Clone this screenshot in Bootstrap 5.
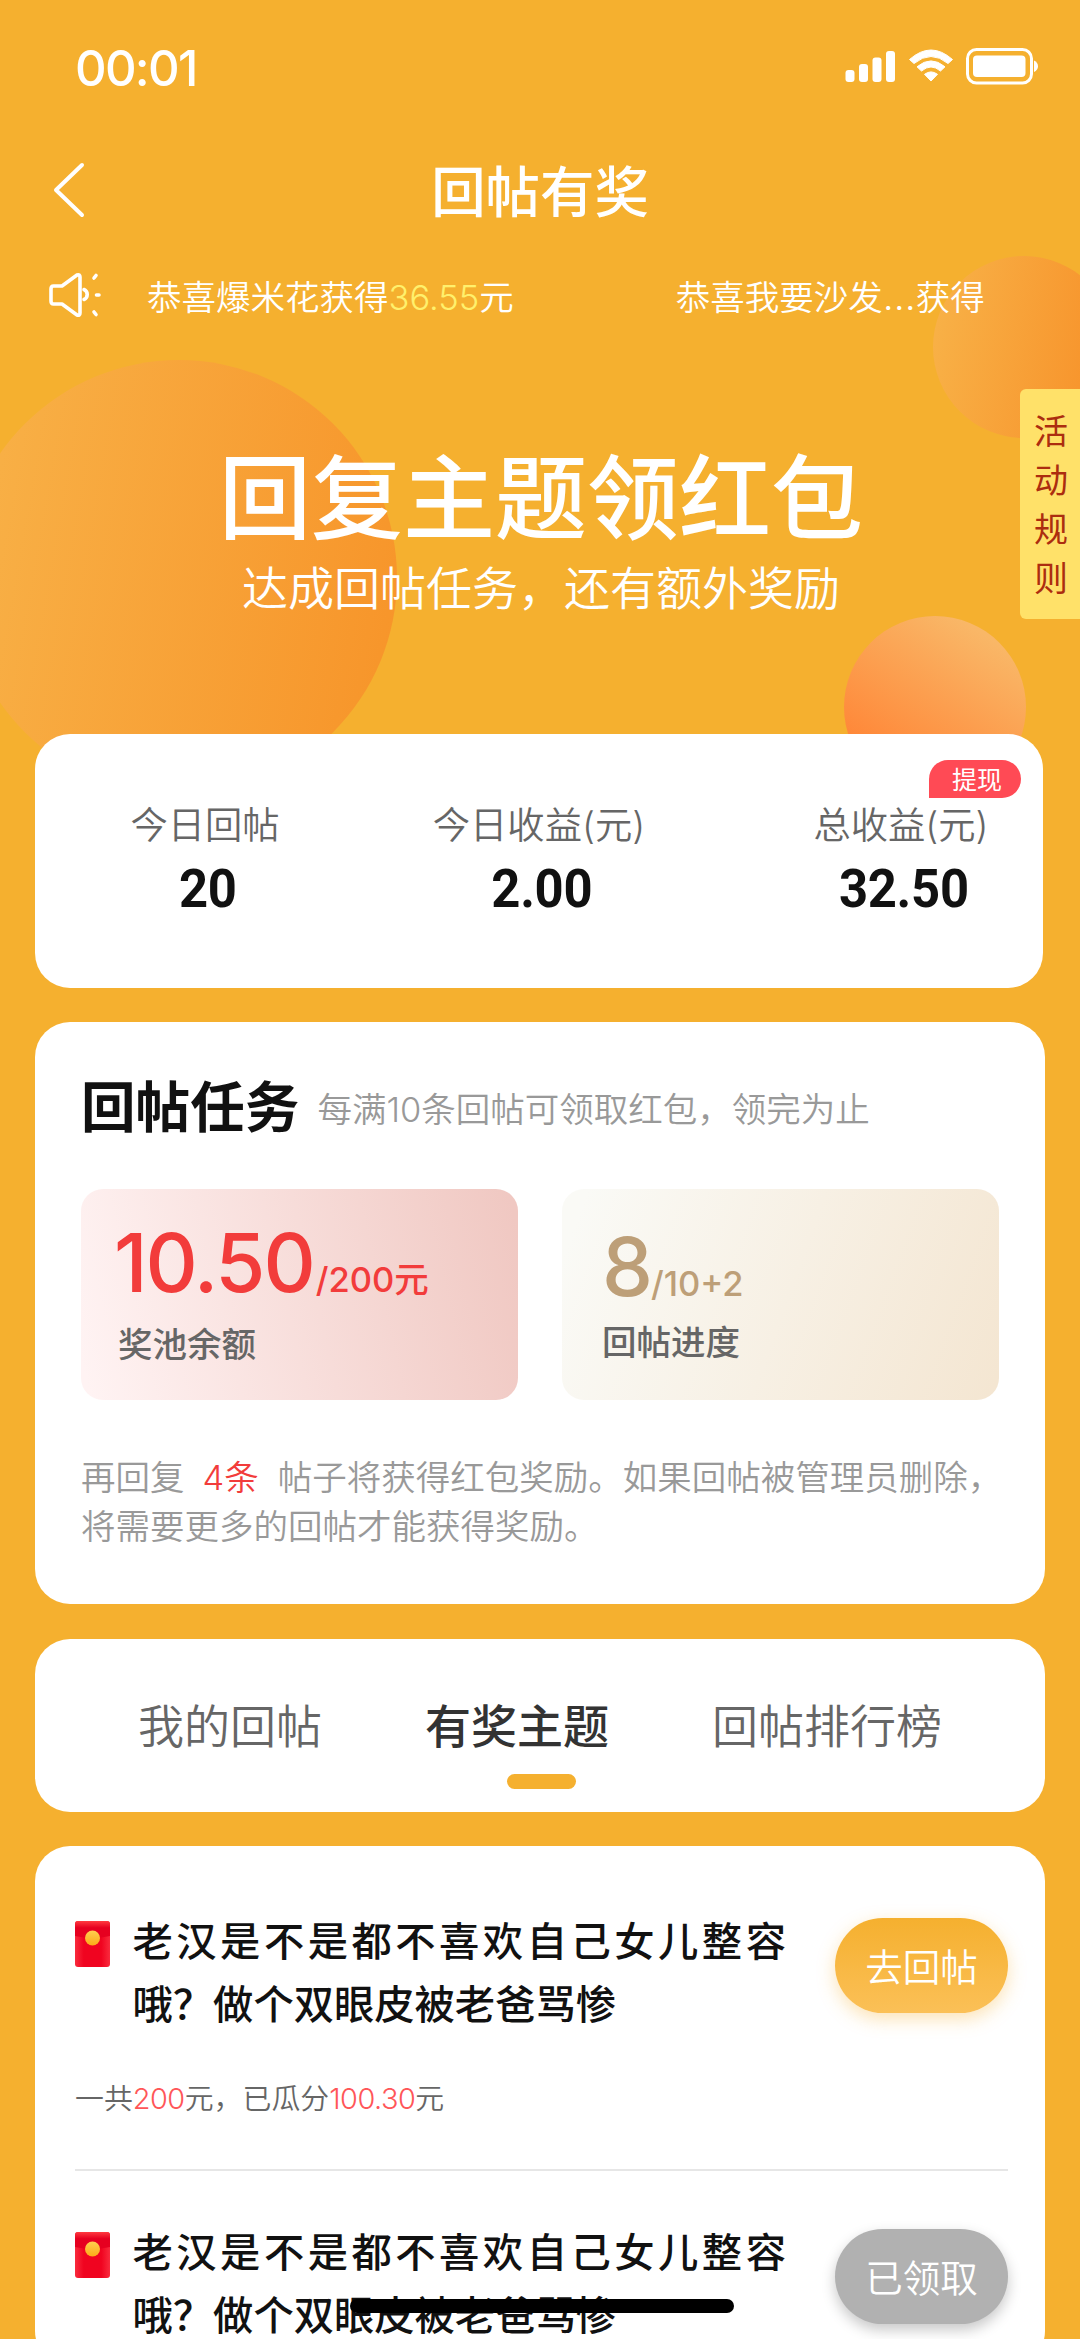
<!DOCTYPE html>
<html lang="zh-CN">
<head>
<meta charset="utf-8">
<meta name="viewport" content="width=device-width, initial-scale=1">
<title>回帖有奖</title>
<link href="https://cdn.jsdelivr.net/npm/bootstrap@5.3.0/dist/css/bootstrap.min.css" rel="stylesheet">
<style>
body{background:#f5b02f;font-family:Inter,"Noto Sans CJK SC",sans-serif;color:#111;height:2339px;overflow:hidden;font-size:34.5px;line-height:49px}
.app-screen{width:1080px;height:2339px;overflow:hidden}
.orb{position:absolute;border-radius:50%}
.orb-left{left:-39px;top:360px;width:436px;height:436px;background:linear-gradient(100deg,#f8b147 5%,#f7952a 95%)}
.orb-top{left:933px;top:256px;width:182px;height:182px;background:linear-gradient(100deg,#f8b147 5%,#f7922a 90%)}
.orb-low{left:844px;top:616px;width:182px;height:182px;background:linear-gradient(212deg,#f9b767 15%,#ff8637 80%)}
.status-row{height:136px;padding:0 40px 0 75px}
.clock{font-size:49px;line-height:137px;letter-spacing:-1.700px;font-weight:450}
.title-row{height:110px}
.title-row h1{font-size:54.400px;line-height:112px;font-weight:500}
.back-link{position:absolute;left:50px;top:26px;line-height:0}
.notice-row{height:98px;padding-left:46px;font-weight:350}
.dots{font-size:39px;line-height:1px}
.hero{height:390px;padding-top:100px}
.hero h2{font-size:92px;line-height:110px;font-weight:500;padding-left:2px}
.hero p{font-size:46px;line-height:66px;font-weight:350;padding:1px 0 0 2px}
.rules-tab{position:absolute;right:0;top:389px;width:60px;height:230px;padding:18px 12px 0 14px;border-radius:6px 0 0 6px;background:#ffe169;color:#ac2d0f;font-size:34px;text-decoration:none}
.panel{background:#fff;border-radius:35px;margin-left:35px;width:1010px}
.stats{width:1008px;height:254px;padding-top:67px}
.stat-label{font-size:37.300px;line-height:49px;color:#666;font-weight:350}
.stat-value{font-family:Roboto,sans-serif;font-weight:700;font-size:54px;line-height:62px;margin-top:8px;padding-left:6px;letter-spacing:-.3px;transform:scaleX(.94)}
.cash-tag{position:absolute;left:894px;top:26px;width:92px;height:38px;padding-left:23px;border-radius:19px 19px 19px 0;background:#ff4a55;color:#fff;font-size:25px;line-height:40px}
.tasks{height:582px;margin-top:34px;padding:51px 46px 0}
.tasks h3{font-size:54.600px;line-height:68px;font-weight:600}
.muted{color:#999;font-weight:350}
.tile{width:437px;height:211px;border-radius:22px}
.tile-red{padding:22px 0 0 37px;background:linear-gradient(77deg,#fff3f3 2%,#f0c8c2 98%);color:#f23c3b}
.tile-gold{padding:26px 0 0 40px;background:linear-gradient(110deg,#fafaf6 5%,#f4e6d2 98%);color:#bd9f78}
.figure-line{height:104px;line-height:104px}
.big-num{font-size:81px;font-weight:500;letter-spacing:-2px}
.tile-red .big-num{margin:0 2px 0 -4px}
.unit{font-weight:500;font-size:34.500px}
.tile-label{color:#666;font-weight:500;margin-top:5px}
.tile-gold .tile-label{margin-top:-1px}
.tabs{height:173px;margin-top:35px;font-size:46px;line-height:64px;color:#666;font-weight:350}
.tab-item{margin:55px 0 0 103px}
.tab-active{color:#333;font-weight:500}
.tab-mark{position:absolute;left:472px;top:135px;width:69px;height:15px;border-radius:8px;background:#f5b02f}
.posts{height:520px;margin-top:34px;padding:0 37px 0 40px}
.post{height:325px;padding-top:64px;border-bottom:2px solid #e6e6e6}
.post + .post{height:312px;margin-top:-14px;border:0}
.post-title{width:665px;margin-left:22.500px;font-size:40.300px;line-height:63px;font-weight:500}
.wide-line{letter-spacing:3.500px;white-space:nowrap}
.post-note{font-size:28.900px;line-height:40px;margin-top:43px;color:#666;font-weight:350}
.rosy{color:#ff5658;letter-spacing:-.5px}
.pill{width:173px;height:95px;border-radius:48px;font-size:37.500px;line-height:99px;padding:0;font-weight:350;color:#fff;border:0;margin-top:8px}
.pill-go{background:linear-gradient(#f5b02f,#fbc057);box-shadow:0 6px 18px rgba(245,176,47,.35)}
.pill-done{background:#b1b1b1;box-shadow:0 6px 14px rgba(0,0,0,.22)}
.home-bar{position:absolute;left:350px;top:2299px;width:384px;height:14px;border-radius:7px;background:#000}
</style>
</head>
<body>
<main class="app-screen position-relative">
  <div class="orb orb-left"></div><div class="orb orb-top"></div><div class="orb orb-low"></div>

  <header class="position-relative text-white">
    <div class="status-row d-flex justify-content-between">
      <span class="clock">00:01</span>
      <svg width="200" height="136" viewBox="840 0 200 136" fill="#fff">
        <rect x="845.5" y="70" width="9" height="12" rx="3"/><rect x="859" y="64" width="9" height="18" rx="3"/><rect x="872.5" y="57.500" width="9" height="24.500" rx="3"/><rect x="886" y="51" width="9" height="31" rx="3"/>
        <path d="M909.5 59.500Q931 40.500 952.500 59.500L948 63.500Q931 49.500 914 63.500Z" stroke="#fff" stroke-width="1" stroke-linejoin="round"/>
        <path d="M917 66.800Q931 55 945 66.800L940.500 71Q931 63 921.500 71Z" stroke="#fff" stroke-width="1" stroke-linejoin="round"/>
        <path d="M924.500 74.300Q931 69.500 937.500 74.300L931 81Z" stroke="#fff" stroke-width="1" stroke-linejoin="round"/>
        <rect x="967.500" y="49.500" width="64" height="33.500" rx="9" fill="none" stroke="#fff" stroke-width="3"/>
        <rect x="973" y="55.500" width="52.500" height="21.500" rx="4"/><path d="M1034 60.500Q1038 62.500 1038 66.200T1034 72Z"/>
      </svg>
    </div>
    <div class="title-row position-relative text-center">
      <a class="back-link" href="#" aria-label="返回"><svg width="40" height="60" fill="none" stroke="#fff" stroke-width="4" stroke-linecap="round" stroke-linejoin="round"><path d="M32 3 6 28l26 25"/></svg></a>
      <h1 class="m-0">回帖有奖</h1>
    </div>
    <div class="notice-row d-flex align-items-center">
      <svg width="101" height="90" viewBox="46 250 101 90" class="flex-shrink-0" fill="none" stroke="#fff" stroke-width="3.600" stroke-linejoin="round" stroke-linecap="round">
        <path d="M53.500 286H62L77 275Q80 274 80 277V313Q80 316 77 315L62 304H53.500Q51 304 51 301V289Q51 286 53.500 286Z"/>
        <path d="M84 289.500A5.500 5.500 0 0 1 84 299.500M94 278l2-2.500M96.500 295H99M94 312l2 2.500"/>
      </svg>
      <span class="pt-1">恭喜爆米花获得<span style="color:#fff06c">36.55</span>元</span>
      <span class="pt-1" style="margin-left:162px">恭喜我要沙发<span class="dots">…</span>获得</span>
    </div>
    <div class="hero text-center">
      <h2 class="m-0">回复主题领红包</h2>
      <p class="m-0">达成回帖任务，还有额外奖励</p>
    </div>
  </header>

  <a class="rules-tab d-block" href="#">活动规则</a>

  <section class="panel stats position-relative d-flex text-center">
    <div class="flex-shrink-0" style="width:340px"><div class="stat-label">今日回帖</div><div class="stat-value">20</div></div>
    <div class="flex-shrink-0" style="width:328px"><div class="stat-label">今日收益(元)</div><div class="stat-value">2.00</div></div>
    <div class="flex-shrink-0" style="width:396px"><div class="stat-label">总收益(元)</div><div class="stat-value">32.50</div></div>
    <span class="cash-tag text-start">提现</span>
  </section>

  <section class="panel tasks">
    <div class="d-flex align-items-center">
      <h3 class="m-0">回帖任务</h3><span class="muted pt-1" style="margin-left:18px">每满10条回帖可领取红包，领完为止</span>
    </div>
    <div class="d-flex justify-content-between" style="padding:48px 0 0">
      <div class="tile tile-red"><div class="figure-line"><span class="big-num">10.50</span><span class="unit">/200元</span></div><div class="tile-label">奖池余额</div></div>
      <div class="tile tile-gold"><div class="figure-line"><span class="big-num">8</span><span class="unit">/10+2</span></div><div class="tile-label">回帖进度</div></div>
    </div>
    <p class="muted mb-0 text-nowrap" style="margin-top:53px">再回复<span style="color:#f23c3b;margin:0 19px 0 18px">4条</span>帖子将获得红包奖励。如果回帖被管理员删除，<br>将需要更多的回帖才能获得奖励。</p>
  </section>

  <nav class="panel tabs position-relative d-flex">
    <span class="tab-item">我的回帖</span>
    <span class="tab-item tab-active">有奖主题</span>
    <span class="tab-item">回帖排行榜</span>
    <span class="tab-mark"></span>
  </nav>

  <section class="panel posts">
    <article class="post">
      <div class="d-flex">
        <svg class="flex-shrink-0" width="35" height="63" viewBox="0 0 35 63"><defs><linearGradient id="env" x1="0" x2="1"><stop stop-color="#f92b3d"/><stop offset=".25" stop-color="#f00420"/><stop offset=".75" stop-color="#f00420"/><stop offset="1" stop-color="#f92b3d"/></linearGradient><linearGradient id="flap" x1="0" x2="0" y1="0" y2="1"><stop stop-color="#ff3a40"/><stop offset=".4" stop-color="#e60020"/></linearGradient><linearGradient id="coin" x1="0" x2="0" y1="0" y2="1"><stop stop-color="#ffcf50"/><stop offset="1" stop-color="#fcab18"/></linearGradient></defs><rect y="11" width="35" height="46" rx="3" fill="url(#env)"/><path d="M0 14Q0 11 3 11H32Q35 11 35 14V26Q17.500 30 0 26Z" fill="url(#flap)"/><circle cx="17.500" cy="28" r="7.500" fill="url(#coin)"/></svg>
        <div class="post-title"><div class="wide-line">老汉是不是都不喜欢自己女儿整容</div><div>哦？做个双眼皮被老爸骂惨</div></div>
        <button class="btn pill pill-go ms-auto flex-shrink-0">去回帖</button>
      </div>
      <div class="post-note">一共<span class="rosy">200</span>元，已瓜分<span class="rosy">100.30</span>元</div>
    </article>
    <article class="post">
      <div class="d-flex">
        <svg class="flex-shrink-0" width="35" height="63" viewBox="0 0 35 63"><rect y="11" width="35" height="46" rx="3" fill="url(#env)"/><path d="M0 14Q0 11 3 11H32Q35 11 35 14V26Q17.500 30 0 26Z" fill="url(#flap)"/><circle cx="17.500" cy="28" r="7.500" fill="url(#coin)"/></svg>
        <div class="post-title"><div class="wide-line">老汉是不是都不喜欢自己女儿整容</div><div>哦？做个双眼皮被老爸骂惨</div></div>
        <button class="btn pill pill-done ms-auto flex-shrink-0">已领取</button>
      </div>
    </article>
  </section>
  <div class="home-bar"></div>
</main>
<script src="https://cdn.jsdelivr.net/npm/bootstrap@5.3.0/dist/js/bootstrap.bundle.min.js"></script>
</body>
</html>
